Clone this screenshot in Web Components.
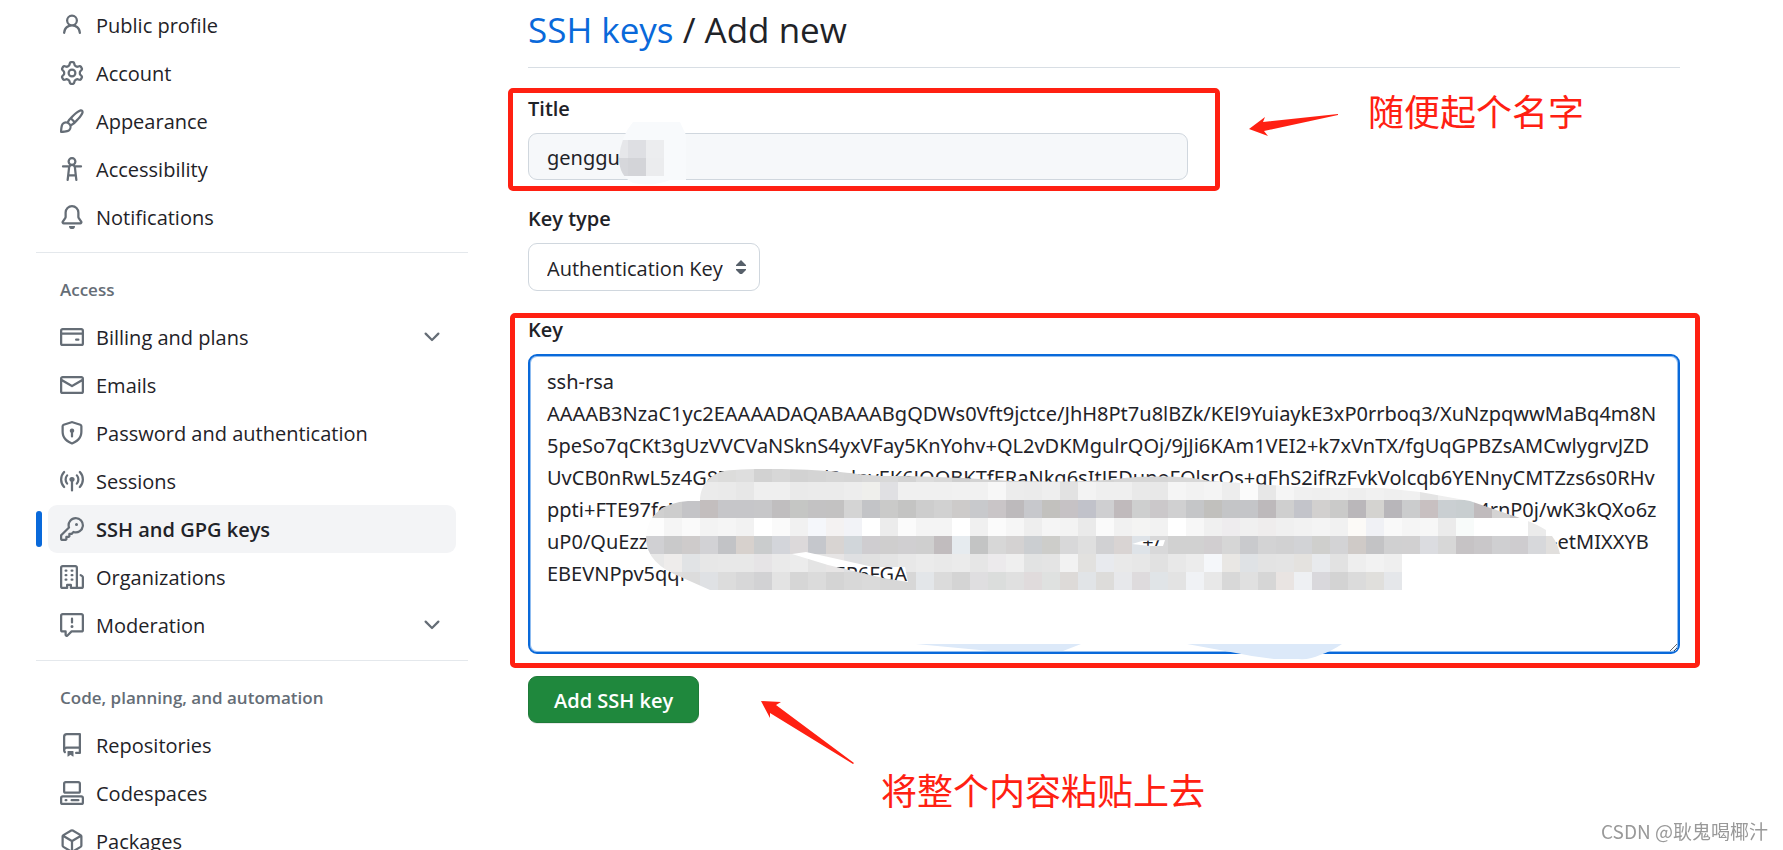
<!DOCTYPE html>
<html lang="en">
<head>
<meta charset="utf-8">
<meta name="viewport" content="width=device-width, initial-scale=1">
<title>Add new SSH key</title>
<style>
  html, body { margin: 0; height: 100%; }
  body {
    background: #fff;
    color: #1f2328;
    font: 20px/24px "Open Sans", "Noto Sans", "Noto Sans CJK SC", sans-serif;
    --muted: #656d76;
    --line: #d0d7de;
    --blue: #0969da;
    --red: #ff2012;
  }
</style>
</head>
<body>
<settings-page>
  <settings-nav slot="nav">
    <nav-section>
      <nav-item icon="person">Public profile</nav-item>
      <nav-item icon="gear">Account</nav-item>
      <nav-item icon="brush">Appearance</nav-item>
      <nav-item icon="accessibility">Accessibility</nav-item>
      <nav-item icon="bell">Notifications</nav-item>
    </nav-section>
    <nav-section heading="Access">
      <nav-item icon="card" expandable>Billing and plans</nav-item>
      <nav-item icon="mail">Emails</nav-item>
      <nav-item icon="shield">Password and authentication</nav-item>
      <nav-item icon="broadcast">Sessions</nav-item>
      <nav-item icon="key" current>SSH and GPG keys</nav-item>
      <nav-item icon="organization">Organizations</nav-item>
      <nav-item icon="report" expandable>Moderation</nav-item>
    </nav-section>
    <nav-section heading="Code, planning, and automation">
      <nav-item icon="repo">Repositories</nav-item>
      <nav-item icon="codespaces">Codespaces</nav-item>
      <nav-item icon="package">Packages</nav-item>
    </nav-section>
  </settings-nav>
  <page-heading><a href="#keys" slot="parent">SSH keys</a>Add new</page-heading>
  <ssh-key-form></ssh-key-form>
</settings-page>
<page-watermark>CSDN @耿鬼喝椰汁</page-watermark>

<script>
const ICONS = {
  person: 'M10.561 8.073a6.005 6.005 0 0 1 3.432 5.142.75.75 0 1 1-1.498.07 4.5 4.5 0 0 0-8.99 0 .75.75 0 0 1-1.498-.07 6.004 6.004 0 0 1 3.431-5.142 3.999 3.999 0 1 1 5.123 0ZM10.5 5a2.5 2.5 0 1 0-5 0 2.5 2.5 0 0 0 5 0Z',
  gear: 'M8 0a8.2 8.2 0 0 1 .701.031C9.444.095 9.99.645 10.16 1.29l.288 1.107c.018.066.079.158.212.224.231.114.454.243.668.386.123.082.233.09.299.071l1.103-.303c.644-.176 1.392.021 1.82.63.27.385.506.792.704 1.218.315.675.111 1.422-.364 1.891l-.814.806c-.049.048-.098.147-.088.294.016.257.016.515 0 .772-.01.147.038.246.088.294l.814.806c.475.469.679 1.216.364 1.891a7.977 7.977 0 0 1-.704 1.217c-.428.61-1.176.807-1.82.63l-1.102-.302c-.067-.019-.177-.011-.3.071a5.909 5.909 0 0 1-.668.386c-.133.066-.194.158-.211.224l-.29 1.106c-.168.646-.715 1.196-1.458 1.26a8.006 8.006 0 0 1-1.402 0c-.743-.064-1.289-.614-1.458-1.26l-.289-1.106c-.018-.066-.079-.158-.212-.224a5.738 5.738 0 0 1-.668-.386c-.123-.082-.233-.09-.299-.071l-1.103.303c-.644.176-1.392-.021-1.82-.63a8.12 8.12 0 0 1-.704-1.218c-.315-.675-.111-1.422.363-1.891l.815-.806c.05-.048.098-.147.088-.294a6.214 6.214 0 0 1 0-.772c.01-.147-.038-.246-.088-.294l-.815-.806C.635 6.045.431 5.298.746 4.623a7.92 7.92 0 0 1 .704-1.217c.428-.61 1.176-.807 1.82-.63l1.102.302c.067.019.177.011.3-.071.214-.143.437-.272.668-.386.133-.066.194-.158.211-.224l.29-1.106C6.009.645 6.556.095 7.299.03 7.53.01 7.764 0 8 0Zm-.571 1.525c-.036.003-.108.036-.137.146l-.289 1.105c-.147.561-.549.967-.998 1.189-.173.086-.34.183-.5.29-.417.278-.97.423-1.529.27l-1.103-.303c-.109-.03-.175.016-.195.045-.22.312-.412.644-.573.99-.014.031-.021.11.059.19l.815.806c.411.406.562.957.53 1.456a4.709 4.709 0 0 0 0 .582c.032.499-.119 1.05-.53 1.456l-.815.806c-.081.08-.073.159-.059.19.162.346.353.677.573.989.02.03.085.076.195.046l1.102-.303c.56-.153 1.113-.008 1.53.27.161.107.328.204.501.29.447.222.85.629.997 1.189l.289 1.105c.029.109.101.143.137.146a6.6 6.6 0 0 0 1.142 0c.036-.003.108-.036.137-.146l.289-1.105c.147-.561.549-.967.998-1.189.173-.086.34-.183.5-.29.417-.278.97-.423 1.529-.27l1.103.303c.109.029.175-.016.195-.045.22-.313.411-.644.573-.99.014-.031.021-.11-.059-.19l-.815-.806c-.411-.406-.562-.957-.53-1.456a4.709 4.709 0 0 0 0-.582c-.032-.499.119-1.05.53-1.456l.815-.806c.081-.08.073-.159.059-.19a6.464 6.464 0 0 0-.573-.989c-.02-.03-.085-.076-.195-.046l-1.102.303c-.56.153-1.113.008-1.53-.27a4.44 4.44 0 0 0-.501-.29c-.447-.222-.85-.629-.997-1.189l-.289-1.105c-.029-.11-.101-.143-.137-.146a6.6 6.6 0 0 0-1.142 0ZM11 8a3 3 0 1 1-6 0 3 3 0 0 1 6 0ZM9.5 8a1.5 1.5 0 1 0-3.001.001A1.5 1.5 0 0 0 9.5 8Z',
  brush: 'M11.134 1.535c.7-.509 1.416-.942 2.076-1.155.649-.21 1.463-.267 2.069.34.603.601.568 1.411.368 2.07-.202.668-.624 1.39-1.125 2.096-1.011 1.424-2.496 2.987-3.775 4.249-1.098 1.084-2.132 1.839-3.04 2.3a3.744 3.744 0 0 1-1.055 3.217c-.431.431-1.065.691-1.657.861-.614.177-1.294.287-1.914.357A21.151 21.151 0 0 1 .797 16H.743l.007-.75H.749L.742 16a.75.75 0 0 1-.743-.742l.743-.008-.742.007v-.054a21.25 21.25 0 0 1 .13-2.284c.067-.647.187-1.287.358-1.914.17-.591.43-1.226.86-1.657a3.746 3.746 0 0 1 3.227-1.054c.466-.893 1.225-1.907 2.314-2.982 1.271-1.255 2.833-2.75 4.245-3.777ZM1.62 13.089c-.051.464-.086.929-.104 1.395.466-.018.932-.053 1.396-.104a10.511 10.511 0 0 0 1.668-.309c.526-.151.856-.325 1.011-.48a2.25 2.25 0 1 0-3.182-3.182c-.155.155-.329.485-.48 1.01a10.515 10.515 0 0 0-.309 1.67Zm10.396-10.34c-1.224.89-2.605 2.189-3.822 3.384l1.718 1.718c1.21-1.205 2.51-2.597 3.387-3.833.47-.662.78-1.227.912-1.662.134-.444.032-.551.009-.575h-.001V1.78c-.014-.014-.113-.113-.548.027-.432.14-.995.462-1.655.942Zm-4.832 7.266-.001.001a9.859 9.859 0 0 0 1.63-1.142L7.155 7.216a9.7 9.7 0 0 0-1.161 1.607c.482.302.889.71 1.19 1.192Z',
  accessibility: 'M9.923 5.302c.063.063.122.129.178.198H14A.75.75 0 0 1 14 7h-3.3l.578 5.163.362 2.997a.75.75 0 0 1-1.49.18L9.868 13H6.132l-.282 2.34a.75.75 0 0 1-1.49-.18l.362-2.997L5.3 7H2a.75.75 0 0 1 0-1.5h3.9a2.54 2.54 0 0 1 .176-.198 3 3 0 1 1 3.847 0ZM9.2 7.073h-.001a1.206 1.206 0 0 0-2.398 0L6.305 11.5h3.39ZM9.5 3a1.5 1.5 0 1 0-3.001.001A1.5 1.5 0 0 0 9.5 3Z',
  bell: 'M8 16a2 2 0 0 0 1.985-1.75c.017-.137-.097-.25-.235-.25h-3.5c-.138 0-.252.113-.235.25A2 2 0 0 0 8 16ZM3 5a5 5 0 0 1 10 0v2.947c0 .05.015.098.042.139l1.703 2.555A1.519 1.519 0 0 1 13.482 13H2.518a1.516 1.516 0 0 1-1.263-2.36l1.703-2.554A.255.255 0 0 0 3 7.947Zm5-3.5A3.5 3.5 0 0 0 4.5 5v2.947c0 .346-.102.683-.294.97l-1.703 2.556a.017.017 0 0 0-.003.01l.001.006c0 .002.002.004.004.006l.006.004.007.001h10.964l.007-.001.006-.004.004-.006.001-.007a.017.017 0 0 0-.003-.01l-1.703-2.554a1.745 1.745 0 0 1-.294-.97V5A3.5 3.5 0 0 0 8 1.5Z',
  card: 'M10.75 9a.75.75 0 0 0 0 1.5h1.5a.75.75 0 0 0 0-1.5h-1.5ZM0 3.75C0 2.784.784 2 1.75 2h12.5c.966 0 1.75.784 1.75 1.75v8.5A1.75 1.75 0 0 1 14.25 14H1.75A1.75 1.75 0 0 1 0 12.25ZM14.5 6.5h-13v5.75c0 .138.112.25.25.25h12.5a.25.25 0 0 0 .25-.25Zm0-2.75a.25.25 0 0 0-.25-.25H1.75a.25.25 0 0 0-.25.25V5h13Z',
  mail: 'M1.75 2h12.5c.966 0 1.75.784 1.75 1.75v8.5A1.75 1.75 0 0 1 14.25 14H1.75A1.75 1.75 0 0 1 0 12.25v-8.5C0 2.784.784 2 1.75 2ZM1.5 12.251c0 .138.112.25.25.25h12.5a.25.25 0 0 0 .25-.25V5.809L8.38 9.397a.75.75 0 0 1-.76 0L1.5 5.809v6.442Zm13-8.181v-.32a.25.25 0 0 0-.25-.25H1.75a.25.25 0 0 0-.25.25v.32L8 7.88Z',
  shield: 'm8.533.133 5.25 1.68A1.75 1.75 0 0 1 15 3.48V7c0 1.566-.32 3.182-1.303 4.682-.983 1.498-2.585 2.813-5.032 3.855a1.697 1.697 0 0 1-1.33 0c-2.447-1.042-4.049-2.357-5.032-3.855C1.32 10.182 1 8.566 1 7V3.48a1.75 1.75 0 0 1 1.217-1.667l5.25-1.68a1.748 1.748 0 0 1 1.066 0Zm-.61 1.429.001.001-5.25 1.68a.251.251 0 0 0-.174.237V7c0 1.36.275 2.666 1.057 3.859.784 1.194 2.121 2.342 4.366 3.298a.196.196 0 0 0 .154 0c2.245-.957 3.582-2.103 4.366-3.297C13.225 9.666 13.5 8.358 13.5 7V3.48a.25.25 0 0 0-.174-.238l-5.25-1.68a.25.25 0 0 0-.153 0ZM9.5 6.5c0 .536-.286 1.032-.75 1.3v2.45a.75.75 0 0 1-1.5 0V7.8A1.5 1.5 0 1 1 9.5 6.5Z',
  broadcast: 'M8.75 8.582v5.668a.75.75 0 0 1-1.5 0V8.582a1.75 1.75 0 1 1 1.5 0Zm3.983-7.125a.75.75 0 0 1 1.06.026A7.976 7.976 0 0 1 16 7c0 2.139-.84 4.083-2.207 5.517a.75.75 0 1 1-1.086-1.034A6.474 6.474 0 0 0 14.5 7a6.474 6.474 0 0 0-1.793-4.483.75.75 0 0 1 .026-1.06Zm-9.466 0c.3.286.312.76.026 1.06A6.474 6.474 0 0 0 1.5 7a6.47 6.47 0 0 0 1.793 4.483.75.75 0 0 1-1.086 1.034A7.973 7.973 0 0 1 0 7c0-2.139.84-4.083 2.207-5.517a.75.75 0 0 1 1.06-.026Zm8.556 2.321A4.988 4.988 0 0 1 13 7a4.988 4.988 0 0 1-1.177 3.222.75.75 0 1 1-1.146-.967A3.487 3.487 0 0 0 11.5 7c0-.86-.309-1.645-.823-2.255a.75.75 0 0 1 1.146-.967Zm-6.492.958A3.48 3.48 0 0 0 4.5 7a3.48 3.48 0 0 0 .823 2.255.75.75 0 0 1-1.146.967A4.981 4.981 0 0 1 3 7a4.982 4.982 0 0 1 1.188-3.236.75.75 0 1 1 1.143.972Z',
  key: 'M10.5 0a5.499 5.499 0 1 1-1.288 10.848l-.932.932a.749.749 0 0 1-.53.22H7v.75a.749.749 0 0 1-.22.53l-.5.5a.749.749 0 0 1-.53.22H5v.75a.749.749 0 0 1-.22.53l-.5.5a.749.749 0 0 1-.53.22h-2A1.75 1.75 0 0 1 0 14.25v-2c0-.199.079-.389.22-.53l4.932-4.932A5.5 5.5 0 0 1 10.5 0Zm-4 5.5c-.001.431.069.86.205 1.269a.75.75 0 0 1-.181.768L1.5 12.56v1.69c0 .138.112.25.25.25h1.69l.06-.06v-1.19a.75.75 0 0 1 .75-.75h1.19l.06-.06v-1.19a.75.75 0 0 1 .75-.75h1.19l1.023-1.025a.75.75 0 0 1 .768-.18A4 4 0 1 0 6.5 5.5ZM11 6a1 1 0 1 1 0-2 1 1 0 0 1 0 2Z',
  organization: 'M1.75 16A1.75 1.75 0 0 1 0 14.25V1.75C0 .784.784 0 1.75 0h8.5C11.216 0 12 .784 12 1.75v12.5c0 .085-.006.168-.018.25h2.268a.25.25 0 0 0 .25-.25V8.285a.25.25 0 0 0-.111-.208l-1.055-.703a.749.749 0 1 1 .832-1.248l1.055.703c.487.325.779.871.779 1.456v5.965A1.75 1.75 0 0 1 14.25 16h-3.5a.766.766 0 0 1-.197-.026c-.099.017-.2.026-.303.026h-3a.75.75 0 0 1-.75-.75V14h-1v1.25a.75.75 0 0 1-.75.75Zm-.25-1.75c0 .138.112.25.25.25H4v-1.25a.75.75 0 0 1 .75-.75h2.5a.75.75 0 0 1 .75.75v1.25h2.25a.25.25 0 0 0 .25-.25V1.75a.25.25 0 0 0-.25-.25h-8.5a.25.25 0 0 0-.25.25ZM3.75 6h.5a.75.75 0 0 1 0 1.5h-.5a.75.75 0 0 1 0-1.5ZM3 3.75A.75.75 0 0 1 3.75 3h.5a.75.75 0 0 1 0 1.5h-.5A.75.75 0 0 1 3 3.75Zm4 3A.75.75 0 0 1 7.75 6h.5a.75.75 0 0 1 0 1.5h-.5A.75.75 0 0 1 7 6.75ZM7.75 3h.5a.75.75 0 0 1 0 1.5h-.5a.75.75 0 0 1 0-1.5ZM3 9.75A.75.75 0 0 1 3.75 9h.5a.75.75 0 0 1 0 1.5h-.5A.75.75 0 0 1 3 9.75ZM7.75 9h.5a.75.75 0 0 1 0 1.5h-.5a.75.75 0 0 1 0-1.5Z',
  report: 'M0 1.75C0 .784.784 0 1.75 0h12.5C15.216 0 16 .784 16 1.75v9.5A1.75 1.75 0 0 1 14.25 13H8.06l-2.573 2.573A1.458 1.458 0 0 1 3 14.543V13H1.75A1.75 1.75 0 0 1 0 11.25Zm1.75-.25a.25.25 0 0 0-.25.25v9.5c0 .138.112.25.25.25h2a.75.75 0 0 1 .75.75v2.19l2.72-2.72a.749.749 0 0 1 .53-.22h6.5a.25.25 0 0 0 .25-.25v-9.5a.25.25 0 0 0-.25-.25Zm7 2.25v2.5a.75.75 0 0 1-1.5 0v-2.5a.75.75 0 0 1 1.5 0ZM9 9a1 1 0 1 1-2 0 1 1 0 0 1 2 0Z',
  repo: 'M2 2.5A2.5 2.5 0 0 1 4.5 0h8.75a.75.75 0 0 1 .75.75v12.5a.75.75 0 0 1-.75.75h-2.5a.75.75 0 0 1 0-1.5h1.75v-2h-8a1 1 0 0 0-.714 1.7.75.75 0 1 1-1.072 1.05A2.495 2.495 0 0 1 2 11.5Zm10.5-1h-8a1 1 0 0 0-1 1v6.708A2.486 2.486 0 0 1 4.5 9h8ZM5 12.25a.25.25 0 0 1 .25-.25h3.5a.25.25 0 0 1 .25.25v3.25a.25.25 0 0 1-.4.2l-1.45-1.087a.249.249 0 0 0-.3 0L5.4 15.7a.25.25 0 0 1-.4-.2Z',
  codespaces: 'M0 11.25c0-.966.784-1.75 1.75-1.75h12.5c.966 0 1.75.784 1.75 1.75v3A1.75 1.75 0 0 1 14.25 16H1.75A1.75 1.75 0 0 1 0 14.25Zm2-9.5C2 .784 2.784 0 3.75 0h8.5C13.216 0 14 .784 14 1.75v5a1.75 1.75 0 0 1-1.75 1.75h-8.5A1.75 1.75 0 0 1 2 6.75Zm1.75-.25a.25.25 0 0 0-.25.25v5c0 .138.112.25.25.25h8.5a.25.25 0 0 0 .25-.25v-5a.25.25 0 0 0-.25-.25Zm-2 9.5a.25.25 0 0 0-.25.25v3c0 .138.112.25.25.25h12.5a.25.25 0 0 0 .25-.25v-3a.25.25 0 0 0-.25-.25ZM7 12.75a.75.75 0 0 1 .75-.75h4.5a.75.75 0 0 1 0 1.5h-4.5a.75.75 0 0 1-.75-.75Zm-4 0a.75.75 0 0 1 .75-.75h.5a.75.75 0 0 1 0 1.5h-.5a.75.75 0 0 1-.75-.75Z',
  package: 'm8.878.392 5.25 3.045c.54.314.872.89.872 1.514v6.098a1.75 1.75 0 0 1-.872 1.514l-5.25 3.045a1.75 1.75 0 0 1-1.756 0l-5.25-3.045A1.75 1.75 0 0 1 1 11.049V4.951c0-.624.332-1.201.872-1.514L7.122.392a1.75 1.75 0 0 1 1.756 0ZM7.875 1.69l-4.63 2.685L8 7.133l4.755-2.758-4.63-2.685a.248.248 0 0 0-.25 0ZM2.5 5.677v5.372c0 .09.047.171.125.216l4.625 2.683V8.432Zm6.25 8.271 4.625-2.683a.25.25 0 0 0 .125-.216V5.677L8.75 8.432Z',
  chevron: 'M12.78 5.22a.749.749 0 0 1 0 1.06l-4.25 4.25a.749.749 0 0 1-1.06 0L3.22 6.28a.749.749 0 1 1 1.06-1.06L8 8.939l3.72-3.719a.749.749 0 0 1 1.06 0Z'
};

const define = (name, render) => customElements.define(name, class extends HTMLElement {
  connectedCallback() {
    if (this.shadowRoot) return;
    this.attachShadow({ mode: 'open' }).innerHTML = render(this);
  }
});

define('ui-icon', el => `
  <style>
    :host { display: block; flex: none; width: 24px; height: 24px; color: var(--muted); }
    svg { display: block; width: 100%; height: 100%; fill: currentColor; }
  </style>
  <svg viewBox="0 0 16 16" aria-hidden="true"><path fill-rule="evenodd" d="${ICONS[el.getAttribute('name')]}"/></svg>`);

define('settings-page', () => `
  <style>
    :host { display: flex; gap: 60px; height: 100vh; overflow: hidden; padding: 0 103px 0 36px; box-sizing: border-box; }
    main { flex: 1; min-width: 0; }
  </style>
  <slot name="nav"></slot>
  <main><slot></slot></main>`);

define('settings-nav', () => `
  <style>
    :host { display: block; flex: none; width: 432px; padding-top: 1px; }
  </style>
  <nav aria-label="Settings"><slot></slot></nav>`);

define('nav-section', el => {
  const heading = el.getAttribute('heading');
  return `
  <style>
    :host { display: block; }
    :host([heading]) { margin-top: 11px; border-top: 1px solid #e4e8ec; }
    h2 { margin: 0; padding: 25px 24px 11px; font-size: 17px; line-height: 24px; font-weight: 600; color: var(--muted); }
    div { padding: 0 12px; }
  </style>
  ${heading ? `<h2>${heading}</h2>` : ''}
  <div role="list"><slot></slot></div>`;
});

define('nav-item', el => `
  <style>
    :host { display: block; position: relative; }
    a { display: flex; align-items: center; gap: 12px; height: 48px; padding: 0 12px; border-radius: 9px; color: inherit; text-decoration: none; }
    span { flex: 1; padding-top: 2px; }
    :host([current]) a { background: #f3f4f6; font-weight: 600; }
    :host([current])::before { content: ""; position: absolute; left: -12px; top: 6px; width: 6px; height: 36px; border-radius: 6px; background: var(--blue); }
  </style>
  <a href="#${el.getAttribute('icon')}">
    <ui-icon name="${el.getAttribute('icon')}"></ui-icon>
    <span><slot></slot></span>
    ${el.hasAttribute('expandable') ? '<ui-icon name="chevron"></ui-icon>' : ''}
  </a>`);

define('page-heading', () => `
  <style>
    :host { display: block; padding: 6px 0 13px; border-bottom: 1px solid #d8dee4; }
    h1 { margin: 0; font-size: 35px; line-height: 48px; font-weight: 400; }
    ::slotted(a) { color: var(--blue); text-decoration: none; }
  </style>
  <h1><slot name="parent"></slot> / <slot></slot></h1>`);

/* Red outline drawn round whatever is slotted into it */
define('red-frame', () => `
  <style>
    :host { display: block; position: relative; }
    :host::after { content: ""; position: absolute; inset: var(--frame); border: 5px solid var(--red); border-radius: 5px; pointer-events: none; }
  </style>
  <slot></slot>`);

/* Arrow with a remark beside it */
define('callout-note', () => `
  <style>
    :host { display: flex; position: absolute; color: var(--red); white-space: nowrap; font: 36px/36px "Noto Sans CJK SC", sans-serif; pointer-events: none; }
    ::slotted(svg) { flex: none; fill: var(--red); }
  </style>
  <slot></slot>`);

/* Mosaic of 18px cells; each row gives its first column and its greys */
const MOSAIC = [
  [2, 'dcdcdc dedede dcdcdb dedede d2d2d2 d7d7d7 d2d2d2 d4d4d4 d6d6d6 d5d5d5 d8d8d8 d8d8d8 d3d3d3 dcdcdc d8d8d8 cfcfcf d3d3d3 d3d3d3 d3d3d3 d3d3d3 d3d3d3 d3d3d3 d3d3d3 d3d3d3 d6d6d6 d6d6d6 d6d6d6 d8d8d8 d8d8d8 d8d8d8 d8d8d8 d8d8d8'],
  [3, 'ebebeb eaeaea e7e7e7 efefef efefef eaeaea ebebeb ebebeb ededed efefec e0e0e3 f0f0f0 f0f0f0 f0f0f0 f1f1f1 f1f1f1 f7f7f7 ececec ebebeb eeeeee e2e2e2 f3f3f3 efefef efefef e9e9e9 e8e8e8 f5f5f5 f2f2f2 f4f4f4 ededed fbfbfb e7e7e7 f5f5f5 f0f0f0 efefef f1f1f1 eeeeee f1f1f1 efefef f0f0f0 e4e4e4 eeeeee efefef efefef eeeeee eeeeee'],
  [0, 'd0d0d0 cdcdcd c4c4c7 c3bebe c6c6c9 c6c6c9 c7c7c9 c0bebf c5c6c4 c3c2c3 c3c2c2 d4d4d4 c3c4c7 cacac9 c4c4c3 cdcdcd d1d1d1 cdcbca c8c9cc c9c5c7 bdbabc c7c8cc c2c1be c6c2c5 c1c2ca cfcfd1 c0babc cecfcf cbc8ca d0d0d1 c5c6c8 c1c0bd c4c5c7 c4c5c8 bdb9bb cfcfcf c3c4ca d2d0cf cacac9 bab7ba d4d3d0 b8b6ba cbcccd c8c0c1 cacfd2 c8ced0 c0bbbd d4d3d3 c5c3c6 c5c3c6'],
  [0, 'fdfdfd f5f5f5 fafafa f3f3f3 f5f5f5 f2f2f2 ffffff fafafa f1f1f1 f5f7fb f4f2f2 f2f3f7 ffffff ececec fbfbfb f4f4f4 f4f4f4 ffffff f0f0f0 fbfbfb f6f6f6 eeeeee f5f5f5 f3f3f3 eaeaea fafafa f1f1f1 f4f4f3 f2f2f2 ffffff f7f7f7 f0f0f0 eeecee f0f0f0 efeded f0f0f0 f2f2f2 f4f4f4 f1f1f1 fcfaf7 f0f1f5 f9f9f9 f5f5f5 f7f7f7 ebebeb f8fbfa ffffff ffffff ffffff ebebeb'],
  [0, 'd0d0d3 c9c9ca cecbcb d2d2d5 c2c3c6 d7d1cd cacccd d3d5da dcd9da c5c7cc d8d4d2 d1d6da cfcdd0 cfcece d0cfd1 cfcfcf c1bcbe e6ebef c3c4c4 d7d7d7 d4d2d2 cbced1 cdcdca d8d8d9 dfdfdf d1d1d3 d9d4d3 dee3e8 d8d8d9 d1d1d1 d1d1d1 d1ced0 d6d6d6 c9cacd d3d3d4 d1d1d2 d2d3d6 cfcfcd d3d3d5 cfcac7 c3c3c5 d0d0d1 d1d0d1 dbdce0 d7d7d7 c6c3c5 c9c7c9 cfcfd1 cecccf d7d8db e1dfdd'],
  [0, 'e8e8e8 eeeceb e1e3e5 e7e7e7 e8e8e8 e8e8e8 e6e4e6 eaeaea ececec e4e4e4 e7e5e5 dfe0e2 e1e1e1 e4e4e4 e8e8e8 ebebeb e9e9e9 ebebeb e6e6e6 eceaec efefef e2e3e3 e4e4e4 f2f2f2 e2e1df e8eaee e9e9e9 e7e7e7 e1e1e1 e8e8e8 ececec f5f7fa e9e7e4 dfe2e5 e3e3e3 e4e4e4 e4e2df e8eaed e2e2e2 eeeeee f2f2f2 efefef efefef'],
  [0, 'dedede dedede dcdcdc dfe1e4 dcdcdc d7d7d8 d2d2d4 e3e3e3 d6d6d6 dbdbdb d4d4d4 d8d8d8 dadada d7d7d7 d7d7d7 e3e6e9 dbdbdb d4d4d4 dfdee0 dbdddc e0e0e0 e0dbdc dfe1e0 dddad8 e1e4e7 dddcda e7e8eb dedbdd e0e4e7 e3e3e3 f0f2f5 e8e8e8 d8d8d8 e0e0e0 d6d6d6 e9e4e2 eef0f3 d9d8dc d3d3d3 dbdbdb e0dfdc e5e7ea']
];
const cells = MOSAIC.map(([start, colours], row) => colours.split(' ').map((c, i) =>
  `<rect x="${118 + 18 * (start + i)}" y="${110 + 18 * row}" width="18" height="18" fill="#${c}"/>`).join('')).join('');

define('key-redaction', () => `
  <style>
    :host { display: block; position: absolute; left: 0; top: 0; pointer-events: none; }
    svg { display: block; overflow: visible; }
  </style>
  <svg width="1152" height="306" viewBox="0 0 1152 306" aria-hidden="true">
    <clipPath id="smear"><path clip-rule="evenodd" d="M172 147C172 132 182 116 206 116C240 114 280 115 312 118C330 120 340 121 352 122C400 122 440 124 484 127C520 128 555 128 590 125C610 122 640 122 664 124L682 127L742 131L790 134L855 134L892 138L942 147L980 160Q1006 168 1018 176V182H1024Q1030 190 1032 200H874V236H182L155 224Q118 210 118 184Q120 150 160 147Z
      M264 200L278 198L345 213L377 213L380 228L355 224L300 211Z
      M604 190L614 187L637 186L635 192L622 192Z"/></clipPath>
    <g clip-path="url(#smear)" shape-rendering="crispEdges">${cells}</g>
    <path fill="#dce9f9" d="M388 290H553L535 297H462ZM659 290H814Q804 297 792 301Q782 306 770 305H746Q726 303 708 299Z"/>
  </svg>`);

/* The masked stretches of the key are left blank */
const blank = n => ' '.repeat(n);
const KEY = [
  'ssh-rsa',
  'AAAAB3NzaC1yc2EAAAADAQABAAABgQDWs0Vft9jctce/JhH8Pt7u8lBZk/KEl9YuiaykE3xP0rrboq3/XuNzpqwwMaBq4m8N',
  '5peSo7qCKt3gUzVVCVaNSknS4yxVFay5KnYohv+QL2vDKMgulrQOj/9jJi6KAm1VEI2+k7xVnTX/fgUqGPBZsAMCwlygrvJZD',
  'UvCB0nRwL5z4G8Z' + blank(16) + '0j3vlnvEK6JOOBKTfERaNkq6sItJEDupoFQlsrQs+gFhS2ifRzFvkVolcqb6YENnyCMTZzs6s0RHv',
  'ppti+FTE97fcN' + blank(153) + '4rnP0j/wK3kQXo6z',
  'uP0/QuEzz' + blank(95) + '+/' + blank(75) + '-etMIXXYB',
  'EBEVNPpv5qqr' + blank(26) + '6EP6FGA'
].join('\n');

define('ssh-key-form', () => `
  <style>
    :host { display: block; padding-top: 28px; }
    form { display: flex; flex-direction: column; align-items: flex-start; margin: 0; position: relative; }
    red-frame { align-self: stretch; }
    .title { max-width: 660px; --frame: -8px -32px -11px -20px; }
    .type { margin: 26px 0; position: relative; }
    .key { --frame: -4px -20px -14px -18px; }
    label { display: block; padding-top: 1px; margin-bottom: 12px; font-weight: 600; }
    input, select, textarea { display: block; box-sizing: border-box; margin: 0; border: 1px solid var(--line); border-radius: 9px; font: inherit; color: inherit; outline: none; background: #fff; }
    input { width: 100%; height: 47px; padding: 2px 18px 0; background: #f6f8fa; font-family: "Noto Sans", sans-serif; }
    select { appearance: none; width: 232px; height: 48px; padding: 3px 36px 0 18px; }
    .arrows { position: absolute; right: 13px; bottom: 17px; fill: #57606a; pointer-events: none; }
    .area { position: relative; }
    textarea { width: 100%; height: 300px; padding: 10px 17px; border: 2px solid var(--blue); box-shadow: inset 0 0 0 1px #8fbcf0; font-family: "Noto Sans", sans-serif; line-height: 32px; overflow: hidden; resize: vertical; }
    .blot { position: absolute; left: 91px; top: 26px; pointer-events: none; }
    button { margin-top: 22px; height: 47px; padding: 3px 25px 0; border: 1px solid #1f7a39; border-radius: 9px; background: #1f883d; color: #fff; font: inherit; font-weight: 600; box-shadow: 0 1px 0 rgba(31, 35, 40, .1); }
    .name-note { left: 721px; top: -4px; gap: 29px; }
    .paste-note { left: 233px; top: 604px; gap: 26px; align-items: flex-end; }
    .paste-note svg { margin-bottom: 43px; }
  </style>
  <form onsubmit="return false">
    <red-frame class="title">
      <label for="title">Title</label>
      <input id="title" type="text" value="genggu">
      <svg class="blot" width="70" height="63" viewBox="0 0 70 63" aria-hidden="true">
        <clipPath id="blot"><path d="M0 36Q2 14 14 0H61L67 13V58H51Q34 65 14 61Q0 54 0 36Z"/></clipPath>
        <g clip-path="url(#blot)" shape-rendering="crispEdges">
          <path fill="#f8fafc" d="M0 0H70V63H0Z"/>
          <path fill="#e6e7ea" d="M0 18H9V36H0Z"/><path fill="#dedfe3" d="M9 18H27V36H9Z"/><path fill="#ecedef" d="M27 18H45V36H27Z"/>
          <path fill="#d6d7db" d="M0 36H9V54H0Z"/><path fill="#d3d4d8" d="M9 36H27V54H9Z"/><path fill="#ebecee" d="M27 36H45V54H27Z"/>
        </g>
      </svg>
    </red-frame>
    <div class="type">
      <label for="type">Key type</label>
      <select id="type"><option>Authentication Key</option></select>
      <svg class="arrows" width="12" height="14" viewBox="0 0 12 14" aria-hidden="true"><path d="M6 0L11 5V6H1V5ZM1 9H11V10L7 14H5L1 10Z"/></svg>
    </div>
    <red-frame class="key">
      <label for="key">Key</label>
      <div class="area">
        <textarea id="key" wrap="off" spellcheck="false">${KEY}</textarea>
        <key-redaction></key-redaction>
      </div>
    </red-frame>
    <button type="submit">Add SSH key</button>
    <callout-note class="name-note">
      <svg width="90" height="45" viewBox="0 0 90 45" aria-hidden="true"><path d="M0 37L16 25L14 30L89 22V23L15 39L19 44Z"/></svg>
      <span>随便起个名字</span>
    </callout-note>
    <callout-note class="paste-note">
      <svg width="94" height="64" viewBox="0 0 94 64" aria-hidden="true"><path d="M0 1L20 2L15 5L93 63L92 64L9 13V18Z"/></svg>
      <span>将整个内容粘贴上去</span>
    </callout-note>
  </form>`);

define('page-watermark', () => `
  <style>
    :host { position: fixed; right: 15px; bottom: 7px; color: #999; font: 19px/24px "Noto Sans CJK SC", sans-serif; pointer-events: none; }
  </style>
  <slot></slot>`);
</script>
</body>
</html>
